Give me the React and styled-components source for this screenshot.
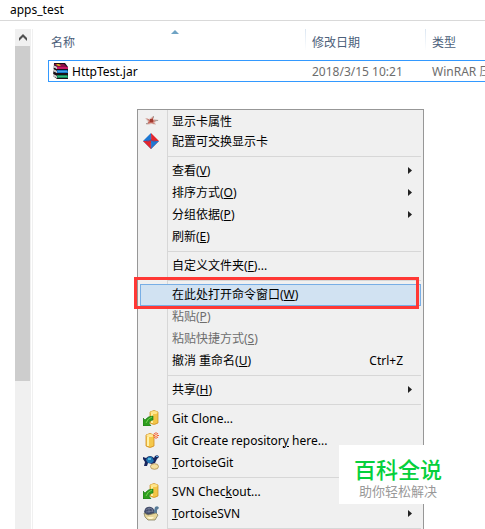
import React from "react";
import styled, { createGlobalStyle, css } from "styled-components";

const menuItems = [
    { icon: "card", text: "显示卡属性", short: true },
    { icon: "swap", text: "配置可交换显示卡" },
    { line: true },
    { text: "查看(", hot: "V", rest: ")", sub: true },
    { text: "排序方式(", hot: "O", rest: ")", sub: true },
    { text: "分组依据(", hot: "P", rest: ")", sub: true },
    { text: "刷新(", hot: "E", rest: ")" },
    { line: true },
    { text: "自定义文件夹(", hot: "F", rest: ")..." },
    { line: true },
    { text: "在此处打开命令窗口(", hot: "W", rest: ")", active: true },
    { text: "粘贴(", hot: "P", rest: ")", disabled: true },
    { text: "粘贴快捷方式(", hot: "S", rest: ")", disabled: true },
    { text: "撤消 重命名(", hot: "U", rest: ")", keys: "Ctrl+Z" },
    { line: true },
    { text: "共享(", hot: "H", rest: ")", sub: true },
    { line: true },
    { icon: "checkout", text: "Git Clone..." },
    { icon: "create", text: "Git Create repositor", hot: "y", rest: " here..." },
    { icon: "git", text: "", hot: "T", rest: "ortoiseGit", sub: true },
    { line: true },
    { icon: "checkout", text: "SVN Chec", hot: "k", rest: "out..." },
    { icon: "svn", text: "", hot: "T", rest: "ortoiseSVN", sub: true },
    { line: true },
];

const RarIcon = () => (
    <svg width="17" height="17" viewBox="0 0 17 17" aria-hidden="true">
        <path d="M2 0h11l3 4v12H5l-4-3z" fill="#1a1018" />
        <path d="M2 1h10l3 3H5z" fill="#8c1048" />
        <path d="M4 1h3l2 2H6z" fill="#d0b020" />
        <path d="M5 4h11v2H5z" fill="#c81868" />
        <path d="M1 2l4 2v2L1 4z" fill="#fff" />
        <path d="M5 7h10l1 1v2H5z" fill="#1878c8" />
        <path d="M6 8h9v1H6z" fill="#40a8e8" />
        <path d="M1 6l4 2v2L1 8z" fill="#fff" />
        <path d="M5 12h10l1 1v2H5z" fill="#108858" />
        <path d="M6 13h9v1H6z" fill="#38b880" />
        <path d="M1 11l4 2v2l-4-2z" fill="#fff" />
        <path d="M1 3l4 2M1 7l4 2M1 12l4 2" stroke="#888" strokeWidth="0.6" />
    </svg>
);

const icons = {
    card: (
        <svg width="16" height="16" viewBox="0 0 16 16" aria-hidden="true">
            <path d="M2 5l4 1 4-3 1 3 5 1-4 2 1 3-4-1-6 1 2-3z" fill="#dcc4be" />
            <path d="M3 5l4 2 3-3v3l3 1-3 1 2 2-4-1-4 1 2-3z" fill="#c4695e" />
            <path d="M7 6h3v3H7z" fill="#a03a30" />
            <path d="M10 3h1v2h-1zM12 7h3v1h-3zM3 10h2v1H3z" fill="#a8a09c" />
        </svg>
    ),
    swap: (
        <svg width="16" height="16" viewBox="0 0 16 16" aria-hidden="true">
            <path d="M8 0v16L0 8z" fill="#1e78d2" />
            <path d="M8 0l8 8-8 8z" fill="#e5262c" />
            <path d="M0 8h8v8z" fill="#e5262c" />
            <path d="M8 8h8l-8 8z" fill="#1e78d2" />
            <path d="M3 8h3l2-1 2 1h3" fill="none" stroke="#7a3f78" />
            <path d="M8 2v4M8 10v4" stroke="#8a6fa8" strokeWidth="0.6" />
        </svg>
    ),
    checkout: (
        <svg width="16" height="16" viewBox="0 0 16 16" aria-hidden="true">
            <path d="M7 2q4-3 8 0v11q-4 3-8 0z" fill="#f3c546" stroke="#c98a1c" strokeWidth="0.7" />
            <path d="M9 3v10" stroke="#fff0a0" strokeWidth="2" />
            <ellipse cx="11" cy="2.5" rx="3.5" ry="1.5" fill="#ffe58a" />
            <path d="M0 8v8h8l-2-3q1-3 4-3V6Q5 6 2 10z" fill="#2e9e1f" stroke="#187010" strokeWidth="0.6" />
            <path d="M3 13q2-5 6-6" fill="none" stroke="#72d250" />
        </svg>
    ),
    create: (
        <svg width="16" height="16" viewBox="0 0 16 16" aria-hidden="true">
            <path d="M3 3q4-3 8 0v11q-4 3-8 0z" fill="#f5c84a" stroke="#cf8a20" strokeWidth="0.8" />
            <path d="M5 5v9" stroke="#fff2a8" strokeWidth="2" />
            <ellipse cx="7" cy="3.5" rx="3.5" ry="1.5" fill="#ffe99a" />
            <path d="M13 0v7M10 3.5h6M11 1l4 5M15 1l-4 5" stroke="#f2683c" />
            <circle cx="13" cy="3.5" r="1" fill="#ffe0b0" />
        </svg>
    ),
    git: (
        <svg width="16" height="16" viewBox="0 0 16 16" aria-hidden="true">
            <path d="M0 3l3 1q4-4 8 0l1-2q3-2 4 1l-2 2-2 4-3 1-4-1-1 3H1l1-4-2-3z" fill="#17245c" />
            <path d="M3 6q2-5 6-3l2 4-2 2H5z" fill="#1f74b0" />
            <path d="M5 4h3v2H5z" fill="#54b8dc" />
            <path d="M13 2h2v1h-2z" fill="#58a8e0" />
            <ellipse cx="11.5" cy="12.5" rx="4" ry="2.8" fill="#f3dfa0" stroke="#a88a4c" strokeWidth="0.8" />
        </svg>
    ),
    svn: (
        <svg width="16" height="16" viewBox="0 0 16 16" aria-hidden="true">
            <path d="M1 7q1-6 7-5 3 1 4 5l-1 3H3z" fill="#424b68" />
            <path d="M3 5l3-2 3 1 1 3M6 3v5M3 7l7-1" fill="none" stroke="#78839f" strokeWidth="0.8" />
            <path d="M11 6l1-4q3-2 4 1l-2 2v3h-3z" fill="#577b98" />
            <path d="M1 8l4 2 8-2 2 2-3 5H5l-3-3z" fill="#e8d79b" stroke="#85805e" strokeWidth="0.8" />
            <path d="M4 12h7l-2 2H6z" fill="#fff6cd" />
        </svg>
    ),
};

const MenuItem = ({ item }) => (
    <Item type="button" role="menuitem" disabled={item.disabled} $active={item.active} $short={item.short}>
        <IconCell>{icons[item.icon]}</IconCell>
        <Label>
            {item.text}
            {item.hot && <u>{item.hot}</u>}
            {item.rest}
        </Label>
        {item.keys && <Keys>{item.keys}</Keys>}
        {item.sub && (
            <Arrow width="4" height="7" viewBox="0 0 4 7" aria-hidden="true">
                <path d="M0 0l4 3.5L0 7z" fill="#222" />
            </Arrow>
        )}
    </Item>
);

const App = () => {
    return (
        <Page>
            <GlobalStyle />
            <AddressBar>apps_test</AddressBar>
            <Content>
                <ScrollBar>
                    <ScrollButton type="button" aria-label="Scroll up">
                        <svg width="8" height="7" viewBox="0 0 8 7" aria-hidden="true">
                            <path d="M0 4l4-4 4 4v3L4 3 0 7z" fill="#505050" />
                        </svg>
                    </ScrollButton>
                    <Thumb />
                </ScrollBar>
                <FileList>
                    <FileTable>
                        <thead>
                            <tr>
                                <HeadCell $width="257px">
                                    名称
                                    <SortMark width="8" height="4" viewBox="0 0 8 4" aria-hidden="true">
                                        <path d="M0 4l4-4 4 4z" fill="#6fa3c4" />
                                    </SortMark>
                                </HeadCell>
                                <HeadCell $width="120px" $divider>修改日期</HeadCell>
                                <HeadCell $divider>类型</HeadCell>
                            </tr>
                        </thead>
                        <tbody>
                            <tr>
                                <Cell>
                                    <FileName>
                                        <RarIcon />
                                        HttpTest.jar
                                    </FileName>
                                </Cell>
                                <Cell>2018/3/15 10:21</Cell>
                                <Cell>WinRAR 压缩文件</Cell>
                            </tr>
                        </tbody>
                    </FileTable>
                </FileList>
            </Content>
            <Menu role="menu">
                {menuItems.map((item, i) =>
                    item.line ? <Line key={i} role="separator" /> : <MenuItem key={i} item={item} />
                )}
            </Menu>
            <RedFrame />
            <Watermark>
                <strong>百科全说</strong>
                <span>助你轻松解决</span>
            </Watermark>
        </Page>
    );
};

export default App;

const GlobalStyle = createGlobalStyle`
    body {
        margin: 0;
        background: #fff;
        color: #000;
        font-family: "Noto Sans", "Noto Sans CJK SC", sans-serif;
        font-size: 12px;
    }
`;

const Page = styled.div`
    position: relative;
    display: flex;
    flex-direction: column;
    height: 100vh;
    overflow: hidden;
`;

const AddressBar = styled.header`
    height: 20px;
    padding-left: 10px;
    line-height: 20px;
    border-bottom: 1px solid #d9d9d9;
`;

const Content = styled.main`
    flex: 1;
    display: flex;
    padding: 8px 0 0 15px;
`;

const ScrollBar = styled.div`
    width: 16px;
    flex-shrink: 0;
    background: #f0f0f0;
    border-right: 1px solid #fff;
    box-shadow: 1px 0 #f0f0f0;
`;

const ScrollButton = styled.button`
    display: flex;
    align-items: center;
    justify-content: center;
    width: 100%;
    height: 17px;
    padding: 0;
    border: 0;
    background: #f0f0f0;
`;

const Thumb = styled.div`
    width: 15px;
    height: 67%;
    background: #cdcdcd;
`;

const FileList = styled.div`
    flex: 1;
    min-width: 0;
    padding-left: 16px;
    overflow: hidden;
`;

const FileTable = styled.table`
    width: 100%;
    table-layout: fixed;
    border-spacing: 0;
    white-space: nowrap;
`;

const HeadCell = styled.th`
    position: relative;
    box-sizing: border-box;
    width: ${(p) => p.$width || "auto"};
    height: 31px;
    padding: 0 0 6px ${(p) => (p.$divider ? "7px" : "3px")};
    color: #4c607a;
    font-weight: 400;
    text-align: left;
    ${(p) =>
        p.$divider &&
        css`
            background: linear-gradient(#dbe6f2, #fff) no-repeat 0 0 / 1px 22px;
        `}
`;

const SortMark = styled.svg`
    position: absolute;
    top: 1px;
    left: 48%;
`;

const Cell = styled.td`
    box-sizing: border-box;
    height: 22px;
    padding: 0 0 0 7px;
    overflow: hidden;
    color: #6d6d6d;
    border: solid #3399ff;
    border-width: 1px 0;

    &:first-child {
        padding-left: 3px;
        color: #000;
        border-left-width: 1px;
    }
`;

const FileName = styled.div`
    display: flex;
    align-items: center;
    gap: 3px;
`;

const Menu = styled.div`
    position: absolute;
    top: 109px;
    left: 137px;
    box-sizing: border-box;
    width: 287px;
    padding: 2px;
    border: 1px solid #979797;
    background: linear-gradient(#d7d7d7, #d7d7d7) no-repeat 29px 0 / 1px 100% #f0f0f0;
`;

const Item = styled.button`
    display: flex;
    align-items: center;
    box-sizing: border-box;
    width: 100%;
    height: ${(p) => (p.$short ? "19px" : "22px")};
    padding: 0 8px 2px 0;
    border: 1px solid transparent;
    background: transparent;
    color: #000;
    font: inherit;
    text-align: left;
    white-space: nowrap;

    &:disabled {
        color: #6d6d6d;
    }

    ${(p) =>
        p.$active &&
        css`
            border-color: #78aee5;
            background: #d1e2f2;
        `}
`;

const IconCell = styled.span`
    display: flex;
    justify-content: center;
    width: 20px;
    margin-right: 11px;
`;

const Label = styled.span`
    flex: 1;

    u {
        text-underline-offset: 1px;
    }
`;

const Keys = styled.span`
    margin-right: 9px;
`;

const Arrow = styled.svg`
    flex-shrink: 0;
`;

const Line = styled.div`
    height: 1px;
    margin: 3px 0 3px 28px;
    background: #d7d7d7;
`;

const RedFrame = styled.div`
    position: absolute;
    top: 277px;
    left: 134px;
    box-sizing: border-box;
    width: 285px;
    height: 32px;
    border: 3px solid #ff3835;
    pointer-events: none;
`;

const Watermark = styled.aside`
    position: absolute;
    right: 0;
    bottom: 25px;
    display: flex;
    flex-direction: column;
    align-items: center;
    box-sizing: border-box;
    width: 146px;
    height: 59px;
    padding: 8px 28px 0 0;
    background: #fff;
    white-space: nowrap;

    strong {
        color: #06d03c;
        font-family: "Noto Sans CJK SC", sans-serif;
        font-size: 22px;
        font-weight: 500;
        line-height: 30px;
    }

    span {
        color: #999;
        font-family: "Noto Sans CJK SC", sans-serif;
        font-size: 13px;
        line-height: 16px;
    }
`;
